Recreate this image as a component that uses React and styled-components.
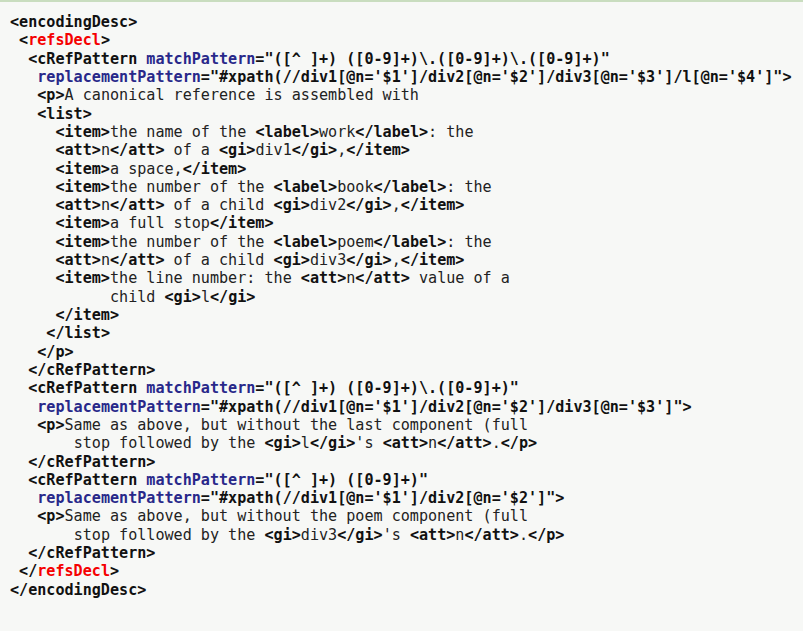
import React from "react";
import styled, { createGlobalStyle } from "styled-components";

const GlobalStyle = createGlobalStyle`
  html, body {
    margin: 0;
    padding: 0;
    background: #f7f8f6;
  }
`;

const Page = styled.div`
  width: 803px;
  height: 631px;
  box-sizing: border-box;
  background: #f7f8f6;
  border-top: 2px solid #c9ddbf;
  padding: 11px 0 0 10px;
  overflow: hidden;
`;

const Code = styled.pre`
  margin: 0;
  font-family: "DejaVu Sans Mono", "Liberation Mono", monospace;
  font-size: 15.1px;
  line-height: 18.32px;
  color: #1e1e1e;
`;

const Line = styled.div`
  white-space: pre;
  padding-left: ${(p) => p.indent * 9.09}px;
`;

const Tag = styled.span`
  font-weight: bold;
  color: ${(p) => (p.$red ? "#f50000" : "#111")};
`;

const Attr = styled.span`
  font-weight: bold;
  color: #28288a;
`;

const Val = styled.span`
  font-weight: bold;
  color: #111;
`;

const Text = styled.span`
  color: #222;
`;

// token helpers: t = tag punctuation/name, r = red element name, a = attribute, v = value, x = text
const lines = [
  [0, [["t", "<encodingDesc>"]]],
  [1, [["t", "<"], ["r", "refsDecl"], ["t", ">"]]],
  [2, [["t", "<cRefPattern "], ["a", "matchPattern"], ["v", "=\"([^ ]+) ([0-9]+)\\.([0-9]+)\\.([0-9]+)\""]]],
  [3, [["a", "replacementPattern"], ["v", "=\"#xpath(//div1[@n='$1']/div2[@n='$2']/div3[@n='$3']/l[@n='$4']\""], ["t", ">"]]],
  [3, [["t", "<p>"], ["x", "A canonical reference is assembled with"]]],
  [3, [["t", "<list>"]]],
  [5, [["t", "<item>"], ["x", "the name of the "], ["t", "<label>"], ["x", "work"], ["t", "</label>"], ["x", ": the"]]],
  [5, [["t", "<att>"], ["x", "n"], ["t", "</att>"], ["x", " of a "], ["t", "<gi>"], ["x", "div1"], ["t", "</gi>"], ["x", ","], ["t", "</item>"]]],
  [5, [["t", "<item>"], ["x", "a space,"], ["t", "</item>"]]],
  [5, [["t", "<item>"], ["x", "the number of the "], ["t", "<label>"], ["x", "book"], ["t", "</label>"], ["x", ": the"]]],
  [5, [["t", "<att>"], ["x", "n"], ["t", "</att>"], ["x", " of a child "], ["t", "<gi>"], ["x", "div2"], ["t", "</gi>"], ["x", ","], ["t", "</item>"]]],
  [5, [["t", "<item>"], ["x", "a full stop"], ["t", "</item>"]]],
  [5, [["t", "<item>"], ["x", "the number of the "], ["t", "<label>"], ["x", "poem"], ["t", "</label>"], ["x", ": the"]]],
  [5, [["t", "<att>"], ["x", "n"], ["t", "</att>"], ["x", " of a child "], ["t", "<gi>"], ["x", "div3"], ["t", "</gi>"], ["x", ","], ["t", "</item>"]]],
  [5, [["t", "<item>"], ["x", "the line number: the "], ["t", "<att>"], ["x", "n"], ["t", "</att>"], ["x", " value of a"]]],
  [11, [["x", "child "], ["t", "<gi>"], ["x", "l"], ["t", "</gi>"]]],
  [5, [["t", "</item>"]]],
  [4, [["t", "</list>"]]],
  [3, [["t", "</p>"]]],
  [2, [["t", "</cRefPattern>"]]],
  [2, [["t", "<cRefPattern "], ["a", "matchPattern"], ["v", "=\"([^ ]+) ([0-9]+)\\.([0-9]+)\""]]],
  [3, [["a", "replacementPattern"], ["v", "=\"#xpath(//div1[@n='$1']/div2[@n='$2']/div3[@n='$3']\""], ["t", ">"]]],
  [3, [["t", "<p>"], ["x", "Same as above, but without the last component (full"]]],
  [7, [["x", "stop followed by the "], ["t", "<gi>"], ["x", "l"], ["t", "</gi>"], ["x", "'s "], ["t", "<att>"], ["x", "n"], ["t", "</att>"], ["x", "."], ["t", "</p>"]]],
  [2, [["t", "</cRefPattern>"]]],
  [2, [["t", "<cRefPattern "], ["a", "matchPattern"], ["v", "=\"([^ ]+) ([0-9]+)\""]]],
  [3, [["a", "replacementPattern"], ["v", "=\"#xpath(//div1[@n='$1']/div2[@n='$2']\""], ["t", ">"]]],
  [3, [["t", "<p>"], ["x", "Same as above, but without the poem component (full"]]],
  [7, [["x", "stop followed by the "], ["t", "<gi>"], ["x", "div3"], ["t", "</gi>"], ["x", "'s "], ["t", "<att>"], ["x", "n"], ["t", "</att>"], ["x", "."], ["t", "</p>"]]],
  [2, [["t", "</cRefPattern>"]]],
  [1, [["t", "</"], ["r", "refsDecl"], ["t", ">"]]],
  [0, [["t", "</encodingDesc>"]]],
];

function Token({ kind, children }) {
  if (kind === "t") return <Tag>{children}</Tag>;
  if (kind === "r") return <Tag $red>{children}</Tag>;
  if (kind === "a") return <Attr>{children}</Attr>;
  if (kind === "v") return <Val>{children}</Val>;
  return <Text>{children}</Text>;
}

export default function App() {
  return (
    <>
      <GlobalStyle />
      <Page>
        <Code>
          {lines.map(([indent, tokens], i) => (
            <Line key={i} indent={indent}>
              {tokens.map(([kind, text], j) => (
                <Token key={j} kind={kind}>{text}</Token>
              ))}
            </Line>
          ))}
        </Code>
      </Page>
    </>
  );
}
